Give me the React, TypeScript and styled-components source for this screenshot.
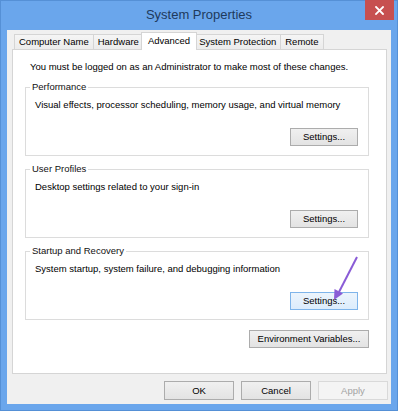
import styled, { createGlobalStyle, css } from 'styled-components';

const GlobalStyle = createGlobalStyle`
  html, body {
    margin: 0;
    padding: 0;
    background: #fff;
  }

  body {
    font-family: 'Liberation Sans', Arial, sans-serif;
    font-size: 9.5px;
    color: #000;
  }
`;

const Page = styled.div`
  position: relative;
  width: 400px;
  height: 412px;
`;

const Window = styled.div`
  box-sizing: border-box;
  width: 398px;
  height: 411px;
  background: #6aa6ec;
  border: 1px solid #5590d6;
  display: flex;
  flex-direction: column;
`;

const TitleBar = styled.div`
  flex: none;
  height: 29px;
  display: grid;
  grid-template-columns: 1fr auto 1fr;
  align-items: start;
`;

const Title = styled.div`
  grid-column: 2;
  font-size: 13px;
  line-height: 27px;
  color: #1e3a5c;
`;

const CloseButton = styled.button`
  all: unset;
  grid-column: 3;
  justify-self: end;
  margin: -1px 3px 0 0;
  width: 29px;
  height: 20px;
  background: #c75050;
  display: flex;
  align-items: center;
  justify-content: center;
`;

const Client = styled.div`
  flex: 1;
  margin: 0 6px 6px;
  padding: 2px 4px 0 5px;
  background: #f0f0f0;
  display: flex;
  flex-direction: column;
`;

const TabStrip = styled.div`
  height: 17px;
  padding-left: 2px;
  display: flex;
  align-items: flex-end;
  position: relative;
  z-index: 1;
`;

const Tab = styled.div<{ $active?: boolean }>`
  box-sizing: border-box;
  height: 15px;
  padding: 0 4px;
  margin-left: -1px;
  line-height: 13px;
  white-space: nowrap;
  border: 1px solid #d5d5d5;
  border-bottom: none;
  background: linear-gradient(#f5f5f5, #ececec);

  &:first-child {
    margin-left: 0;
  }

  ${(p) =>
    p.$active &&
    css`
      height: 18px;
      margin: 0 -2px -1px -3px;
      padding: 0 6px;
      line-height: 15px;
      background: #fff;
      position: relative;
      z-index: 1;
    `}
`;

const Panel = styled.div`
  box-sizing: border-box;
  height: 325px;
  padding: 11px 17px 0 12px;
  background: #fff;
  border: 1px solid #d5d5d5;
  display: flex;
  flex-direction: column;
`;

const Notice = styled.div`
  padding-left: 5px;
  line-height: 12px;
  margin-bottom: 8px;
`;

const Group = styled.fieldset`
  margin: 0 0 7px;
  padding: 6px 10px 9px 9px;
  min-width: 0;
  border: 1px solid #dcdcdc;
  display: flex;
  flex-direction: column;

  &:last-of-type {
    margin-bottom: 0;
  }
`;

const Legend = styled.legend`
  padding: 0 2px;
  margin-left: -5px;
  line-height: 12px;
  color: #111;
`;

const Description = styled.div`
  line-height: 12px;
  margin-bottom: 17px;
`;

const Button = styled.button<{ $width: number; $hot?: boolean; $tall?: boolean }>`
  all: unset;
  box-sizing: border-box;
  width: ${(p) => p.$width}px;
  height: ${(p) => (p.$tall ? 19 : 18)}px;
  text-align: center;
  font-family: 'Liberation Sans', Arial, sans-serif;
  font-size: 9.5px;
  line-height: ${(p) => (p.$tall ? 17 : 16)}px;
  color: #000;
  border: 1px solid #acacac;
  background: linear-gradient(#f0f0f0, #e3e3e3);

  &:disabled {
    color: #a3a3a3;
    border-color: #d9d9d9;
    background: #f4f4f4;
  }

  ${(p) =>
    p.$hot &&
    css`
      border-color: #7eb4ea;
      background: linear-gradient(#ecf4fc, #dcecfc);
    `}
`;

const GroupButton = styled(Button)`
  align-self: flex-end;
`;

const EnvButton = styled(Button)`
  align-self: flex-end;
  margin-top: 10px;
`;

const Footer = styled.div`
  margin: 7px -1px 0 0;
  display: flex;
  justify-content: flex-end;
  gap: 7px;
`;

const Annotation = styled.svg`
  position: absolute;
  left: 0;
  top: 0;
  pointer-events: none;
`;

const groups = [
  {
    title: 'Performance',
    text: 'Visual effects, processor scheduling, memory usage, and virtual memory',
  },
  {
    title: 'User Profiles',
    text: 'Desktop settings related to your sign-in',
  },
  {
    title: 'Startup and Recovery',
    text: 'System startup, system failure, and debugging information',
    hot: true,
  },
];

const tabs = ['Computer Name', 'Hardware', 'Advanced', 'System Protection', 'Remote'];

export default function App() {
  return (
    <Page>
      <GlobalStyle />
      <Window>
        <TitleBar>
          <Title>System Properties</Title>
          <CloseButton aria-label="Close">
            <svg width="9" height="9" viewBox="0 0 9 9">
              <path d="M1 1 L8 8 M8 1 L1 8" stroke="#fff" strokeWidth="1.8" strokeLinecap="square" />
            </svg>
          </CloseButton>
        </TitleBar>
        <Client>
          <TabStrip>
            {tabs.map((t) => (
              <Tab key={t} $active={t === 'Advanced'}>
                {t}
              </Tab>
            ))}
          </TabStrip>
          <Panel>
            <Notice>You must be logged on as an Administrator to make most of these changes.</Notice>
            {groups.map((g) => (
              <Group key={g.title}>
                <Legend>{g.title}</Legend>
                <Description>{g.text}</Description>
                <GroupButton $width={68} $hot={g.hot}>
                  Settings...
                </GroupButton>
              </Group>
            ))}
            <EnvButton $width={120}>Environment Variables...</EnvButton>
          </Panel>
          <Footer>
            <Button $width={70} $tall>
              OK
            </Button>
            <Button $width={70} $tall>
              Cancel
            </Button>
            <Button $width={70} $tall disabled>
              Apply
            </Button>
          </Footer>
        </Client>
      </Window>
      <Annotation width="400" height="412">
        <line x1="357" y1="257" x2="339" y2="292" stroke="#8a5cd6" strokeWidth="2" />
        <polygon points="334,300 334.5,289 343,293.5" fill="#8a5cd6" />
      </Annotation>
    </Page>
  );
}
